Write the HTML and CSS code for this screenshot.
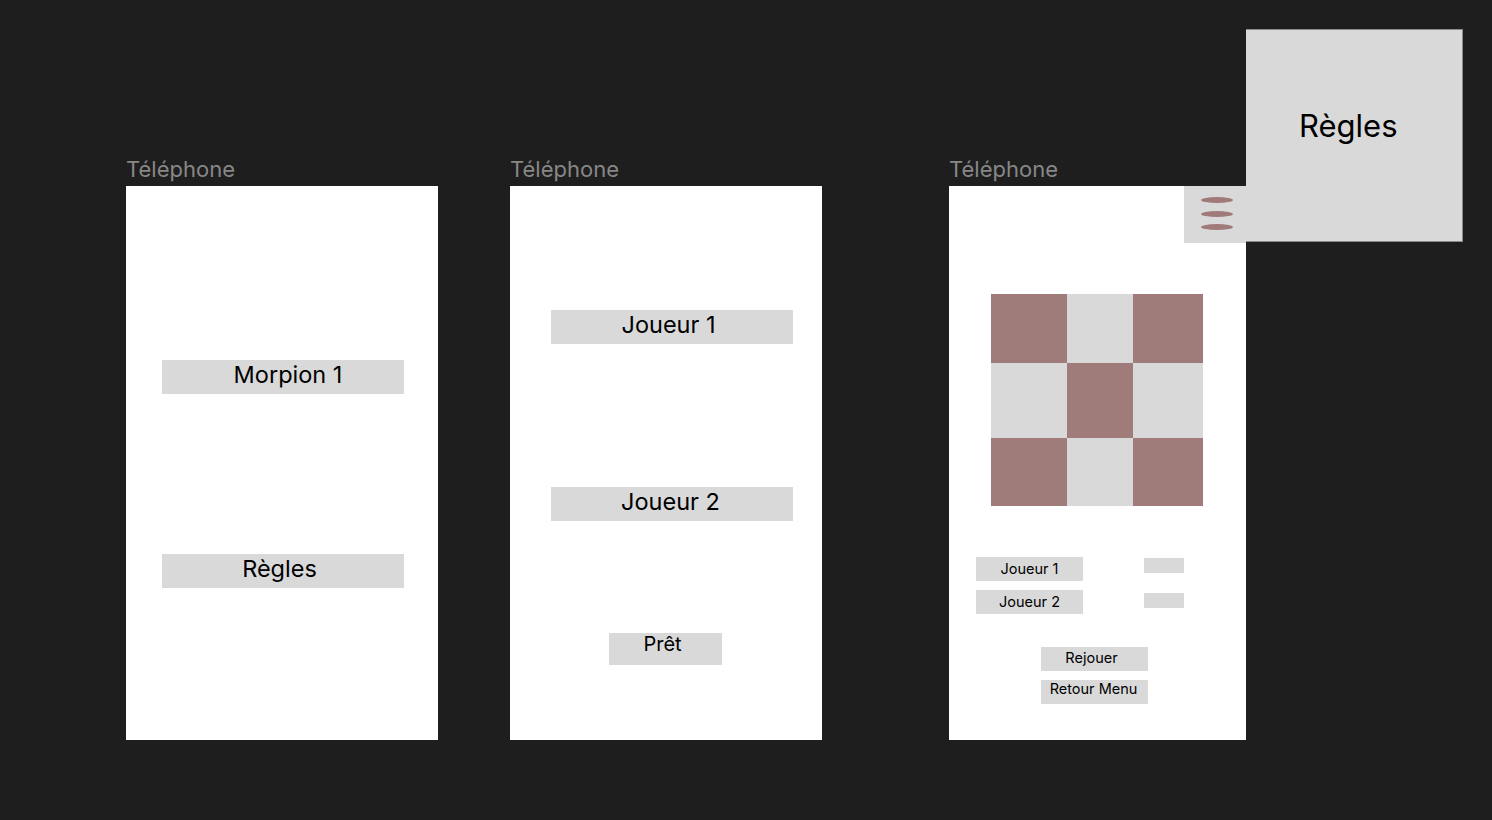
FILE: index.html
```html
<!DOCTYPE html>
<html lang="fr">
<head>
<meta charset="utf-8">
<title>Morpion</title>
<link rel="stylesheet" href="styles.css">
</head>
<body>
<div class="canvas">
  <div class="col">
    <div class="label">Téléphone</div>
    <div class="phone p1">
      <div class="btn lg morpion">Morpion 1</div>
      <div class="btn lg regles">Règles</div>
    </div>
  </div>
  <div class="col c2">
    <div class="label">Téléphone</div>
    <div class="phone p2">
      <div class="btn lg j1">Joueur 1</div>
      <div class="btn lg j2">Joueur 2</div>
      <div class="btn pret">Prêt</div>
    </div>
  </div>
  <div class="col c3">
    <div class="label">Téléphone</div>
    <div class="phone p3">
      <div class="menu-btn">
        <span class="bar"></span><span class="bar"></span><span class="bar"></span>
      </div>
      <div class="board">
        <div class="cell x"></div><div class="cell"></div><div class="cell x"></div>
        <div class="cell"></div><div class="cell x"></div><div class="cell"></div>
        <div class="cell x"></div><div class="cell"></div><div class="cell x"></div>
      </div>
      <div class="score-row r1">
        <div class="btn sm player">Joueur 1</div>
        <div class="score s1"></div>
      </div>
      <div class="score-row r2">
        <div class="btn sm player">Joueur 2</div>
        <div class="score s2"></div>
      </div>
      <div class="btn sm rejouer">Rejouer</div>
      <div class="btn sm retour">Retour Menu</div>
    </div>
  </div>
  <div class="rules-popup">Règles</div>
</div>
</body>
</html>
```
FILE: styles.css
```css
html, body {
  margin: 0;
  padding: 0;
  background: #1e1e1e;
  width: 1492px;
  height: 820px;
  overflow: hidden;
  font-family: Inter, "Noto Sans", "Liberation Sans", sans-serif;
}
.canvas {
  position: relative;
  display: flex;
  align-items: flex-start;
  padding: 156px 0 0 126px;
  height: 820px;
  box-sizing: border-box;
}
.col { display: flex; flex-direction: column; }
.c2 { margin-left: 72px; }
.c3 { margin-left: 127px; }
.label {
  color: #878787;
  font-size: 22px;
  line-height: 26px;
  margin-bottom: 4px;
}
.phone {
  position: relative;
  background: #ffffff;
  width: 312px;
  height: 554px;
  box-sizing: border-box;
  display: flex;
  flex-direction: column;
  align-items: flex-start;
}
.btn {
  background: #d9d9d9;
  color: #000;
  text-align: center;
  box-sizing: border-box;
}
.lg {
  width: 242px;
  height: 34px;
  font-size: 23.5px;
  line-height: 29px;
}
.p1 { padding: 174px 0 0 36px; }
.morpion { padding-left: 10px; }
.regles { margin-top: 160px; padding-right: 7px; }
.p2 { padding: 124px 0 0 41px; }
.j1 { padding-right: 7px; }
.j2 { margin-top: 143px; padding-right: 3px; }
.pret {
  margin: 112px 0 0 58px;
  width: 113px;
  height: 32px;
  font-size: 20px;
  line-height: 22px;
  padding-right: 6px;
}
.p3 { width: 297px; padding-top: 108px; }
.menu-btn {
  position: absolute;
  top: 0;
  right: 0;
  width: 62px;
  height: 57px;
  background: #d9d9d9;
  box-sizing: border-box;
  padding: 11px 0 0 17px;
  display: flex;
  flex-direction: column;
  gap: 7.6px;
}
.bar {
  display: block;
  width: 32px;
  height: 6px;
  border-radius: 50%;
  background: #a07a79;
}
.board {
  margin-left: 42px;
  display: grid;
  grid-template-columns: 76px 65.5px 70.5px;
  grid-template-rows: 69px 75px 68px;
}
.cell { background: #d9d9d9; }
.cell.x { background: #9f7b79; }
.score-row {
  display: flex;
  align-items: flex-start;
  margin-left: 27px;
}
.r1 { margin-top: 51px; }
.r2 { margin-top: 9px; }
.sm {
  width: 107px;
  height: 24px;
  font-size: 14.5px;
  line-height: 18px;
}
.player { padding-top: 3px; }
.score {
  background: #d9d9d9;
  width: 40px;
  height: 15px;
  margin-left: 61px;
}
.s1 { margin-top: 1px; }
.s2 { margin-top: 3px; }
.rejouer { margin: 33px 0 0 92px; padding: 2px 6px 0 0; }
.retour { margin: 9px 0 0 92px; padding-right: 2px; }
.rules-popup {
  position: absolute;
  left: 1246px;
  top: 29px;
  width: 217px;
  height: 213px;
  box-sizing: border-box;
  background: #d9d9d9;
  border: 1px solid #8a8a8a;
  border-left: none;
  color: #000;
  font-size: 31px;
  line-height: 39px;
  padding: 76px 0 0 53px;
}
```
